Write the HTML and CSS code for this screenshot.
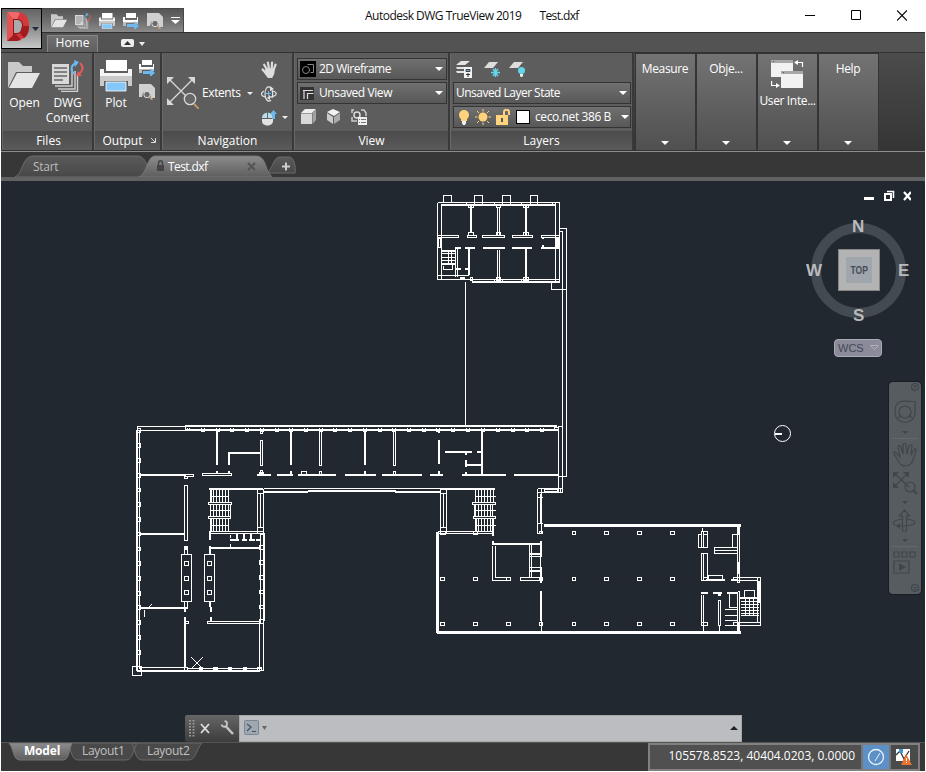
FILE: index.html
```html
<!DOCTYPE html>
<html lang="en">
<head>
<meta charset="utf-8">
<title>Autodesk DWG TrueView 2019</title>
<link rel="stylesheet" href="styles.css">
</head>
<body>
<svg class="defs" width="0" height="0">
  <symbol id="folder" viewBox="0 0 32 27"><path fill="#c9c9c9" d="M0 0h11l4 4h9v6H8L0 26z"/><path fill="#e4e4e4" d="M9 11h23l-8 15H1z"/></symbol>
  <symbol id="convert" viewBox="0 0 32 32"><path fill="#d8d8d8" d="M0 4h17v20H0z"/><path stroke="#666" stroke-width="1.3" d="M2 8h13M2 12h13M2 16h13M2 20h9"/><path fill="none" stroke="#d0d0d0" stroke-width="1.4" d="M3 26h17V9M6 29h17V11M9 31.500h16.500V15"/><path fill="none" stroke="#6cb8ef" stroke-width="2" d="M22 14c-4-4-3-9 2-11"/><path fill="#6cb8ef" d="M22 0l5 2-4 5z"/><path fill="none" stroke="#e65a5a" stroke-width="2" d="M28 3c4 4 3 8-1 11"/><path fill="#e65a5a" d="M30 16h-6l2-5z"/></symbol>
  <symbol id="printer" viewBox="0 0 32 32"><path fill="#fff" d="M6 0h21v11H6z"/><path fill="#f4f4f4" d="M0 9h4v4h24V9h4v7H0z"/><path fill="#c9c9c9" d="M0 16h32v10h-4v-5H4v5H0z"/><path fill="#85c7f7" stroke="#fff" stroke-width=".8" d="M6 22h20v9H6z"/></symbol>
  <symbol id="batch" viewBox="0 0 16 16"><path fill="#fff" d="M3 0h10v5H3zM0 4h2v3h12V4h1v5H0z"/><path fill="#bdbdbd" d="M0 9h15v2h-4v-1H3v3H0z"/><path fill="#6cb8ef" d="M4 11h7V8l5 5-5 4v-3H4z"/></symbol>
  <symbol id="preview" viewBox="0 0 16 16"><path fill="#d0d0d0" d="M0 0h12l4 4v10h-4l-1-4-3-3-4 2-1 4H0z"/><circle cx="8" cy="10.500" r="3.200" fill="#6b6b6b" stroke="#ddd"/><path stroke="#c7a981" stroke-width="1.500" d="M10.500 13l3 3"/></symbol>
  <symbol id="extents" viewBox="0 0 32 32"><path stroke="#d8d8d8" stroke-width="1.300" d="M2 2l18 18M26 2L2 26"/><path fill="#d8d8d8" d="M0 0h7L0 7zM28 0v7l-7-7zM0 28v-7l7 7z"/><circle cx="23" cy="22" r="5.700" fill="#666" stroke="#d8d8d8" stroke-width="1.300"/><path stroke="#c69a66" stroke-width="1.800" d="M27 27l5 5"/></symbol>
  <symbol id="hand" viewBox="0 0 16 16"><path fill="none" stroke="currentColor" stroke-linecap="round" stroke-width="2.100" d="M5.500 8L3 3.500M7.500 7.500L6.500 1.500M10 7.500l.4-6M11.500 9l2.200-5.500M5 12L1.500 8"/><path fill="currentColor" d="M4 7l9 0-.5 5-2 4H6.500l-3-4z"/></symbol>
</svg>

<div class="window">
  <header class="titlebar">
    <div class="quickbar">
      <svg width="16" height="14"><use href="#folder"/></svg>
      <svg width="16" height="16"><use href="#convert"/></svg>
      <svg width="16" height="16"><use href="#printer"/></svg>
      <svg width="16" height="16"><use href="#batch"/></svg>
      <svg width="16" height="16"><use href="#preview"/></svg>
      <svg width="9" height="9"><path fill="#fff" d="M0 1h9v1H0zM0 4h9L4.500 8z"/></svg>
    </div>
    <div class="title"><span class="t-app">Autodesk DWG TrueView 2019</span><span class="t-file">Test.dxf</span></div>
    <div class="controls">
      <svg width="10" height="11"><path stroke="#000" d="M0 5.500h10"/></svg>
      <svg width="10" height="11"><path fill="none" stroke="#000" d="M.5.5h9v9h-9z"/></svg>
      <svg width="10" height="11"><path stroke="#000" stroke-width="1.100" d="M0 .5l10 10M10 .5l-10 10"/></svg>
    </div>
    <button class="appbutton" aria-label="Application menu">
      <svg width="40" height="38"><path fill="#d5383b" d="M5 2h10c8 0 12 5 12 14s-4 14-13 14l-9 1z"/><path fill="#8d1519" d="M11 9h4c4 0 6 3 6 7s-2 8-6 8l-4 1z"/><path fill="#a9abac" d="M12 10h3c3 0 5 2 5 6s-2 7-5 7h-3z"/><path fill="#ed6a68" d="M5 2l6 7h4l3-6-3-1z"/><path fill="#a01c20" d="M5 31l6-6h4l4 5-4 1zM20 16h7c0 6-2 10-5 12l-4-5z"/><path fill="#e55251" d="M5 2l6 7v16l-6 6z"/><path fill="#222b39" d="M30 17h7l-3.500 4z"/></svg>
    </button>
  </header>

  <nav class="tabrow"><span class="home">Home</span><svg width="26" height="9"><rect width="13" height="8" rx="2" fill="#eee"/><path fill="#333" d="M3 6h7L6.500 2z"/><path fill="#eee" d="M18 3h6l-3 4z"/></svg></nav>

  <section class="ribbon">
    <div class="panel files">
      <div class="body">
        <div class="big open"><svg width="32" height="27"><use href="#folder"/></svg><span>Open</span></div>
        <div class="big dwg"><svg width="32" height="32"><use href="#convert"/></svg><span>DWG</span><span>Convert</span></div>
      </div>
      <h2>Files</h2>
    </div>
    <div class="panel output">
      <div class="body">
        <div class="big"><svg width="32" height="32"><use href="#printer"/></svg><span>Plot</span></div>
        <div class="stack"><svg width="16" height="16"><use href="#batch"/></svg><svg width="16" height="16"><use href="#preview"/></svg></div>
      </div>
      <h2><span>Output</span><svg width="5" height="5"><path stroke="#ddd" fill="none" d="M0 0l4 4M4.500 0v4.500H0"/></svg></h2>
    </div>
    <div class="panel navigation">
      <div class="body">
        <svg width="32" height="32"><use href="#extents"/></svg><span class="ext">Extents</span><i class="tri"></i>
        <div class="stack">
          <svg class="pan" width="17" height="17"><use href="#hand"/></svg>
          <svg width="16" height="16"><path fill="none" stroke="#e2e2e2" stroke-width="1.200" d="M10 2c-4-3-6 1-6 6s3 9 6 6M3 5c-4 2-3 5 1 6M11 4c1 3 1 5 0 8M8 11c5 0 8-2 7-4-1-2-3-2-4-2"/><path fill="#e2e2e2" d="M9 0l4 3-4 2zM9 9v5l-3-2z"/><path stroke="#6cb8ef" d="M7.500 5v5M5 7.500h5"/></svg>
          <span class="mouse"><svg width="16" height="16"><path fill="#e2e2e2" d="M1 9h11v2c0 6-11 6-11 0z"/><path fill="#b9dcea" d="M1 8c0-7 11-7 11 0z"/><path fill="#666" d="M6 2h1v6H6z"/><path fill="#6cb8ef" d="M11 9V4H9l3.500-4L16 4h-2v5z"/></svg><i class="tri"></i></span>
        </div>
      </div>
      <h2>Navigation</h2>
    </div>
    <div class="panel view">
      <div class="body col">
        <div class="combo"><svg width="16" height="16"><path d="M0 0h16v16H0z"/><circle cx="6" cy="9" r="3.500" fill="none" stroke="#888"/><path fill="none" stroke="#888" d="M7.500 3.500h6v8h-3"/></svg><span class="wf">2D Wireframe</span><i class="tri wide"></i></div>
        <div class="combo"><svg width="14" height="13"><path fill="#333" d="M0 0h14v13H0z"/><path fill="none" stroke="#ddd" stroke-width="1.200" d="M3 3.500h10M4 3v9M7.500 12V6.500h6"/></svg><span class="uv">Unsaved View</span><i class="tri wide"></i></div>
        <div class="icons">
          <svg width="15" height="15"><path fill="#eee" d="M0 4l4-4h11l-4 4z"/><path fill="#d8d8d8" d="M0 4.500h11V15H0z"/><path fill="#a2a2a2" d="M11.500 4L15 0v11l-3.500 4z"/></svg>
          <svg width="15" height="15"><path fill="#f2f2f2" d="M1 3l6-3 7 3-6 4z"/><path fill="#ccc" d="M1 4l6 4v7l-6-4z"/><path fill="#aaa" d="M8 8l6-4v7l-6 4z"/></svg>
          <svg width="17" height="16"><path fill="none" stroke="#ccc" stroke-width="1.500" d="M1 4V1h2M10 1h3l2 3v3M1 8v4h5"/><circle cx="6" cy="6" r="3" fill="#555" stroke="#ddd" stroke-width="1.500"/><path fill="#f0f0f0" d="M7 8h9v8H7z"/><path stroke="#777" d="M8 10.500h1M10 10.500h5M8 13.500h1M10 13.500h5"/></svg>
        </div>
      </div>
      <h2>View</h2>
    </div>
    <div class="panel layers">
      <div class="body col">
        <div class="icons top">
          <svg width="17" height="17"><path fill="#e4e4e4" d="M5 0h9L9 4H0zM0 6h9v2H1zM0 10h8v2H1z"/><path fill="#f4f4f4" d="M8 6h8v11H8z"/><path fill="#5aaced" stroke="#444" d="M10 8.500h4v2h-4z"/><path stroke="#333" d="M10 13.500h4M12 12v4"/></svg>
          <svg width="17" height="17"><path fill="#ddd" d="M5 1h9L9 7H0z"/><path stroke="#62d5e6" stroke-width="1.400" d="M7 11.500h9M9 8l5 7M14 8l-5 7M11.500 7v9"/></svg>
          <svg width="17" height="17"><path fill="#ddd" d="M5 1h9L9 7H0z"/><circle cx="12.500" cy="9.500" r="3.500" fill="#62d5e6"/><path fill="#eee" d="M11 13h3v2l-1 1h-1l-1-1z"/></svg>
        </div>
        <div class="combo"><span class="ls">Unsaved Layer State</span><i class="tri wide"></i></div>
        <div class="combo">
          <svg width="12" height="16"><circle cx="6" cy="6" r="5" fill="#ffd27c"/><path fill="#ffd27c" d="M3 9h6v3H3z"/><path fill="#f4f4f4" d="M4 12h4v2l-1 2H5l-1-2z"/></svg>
          <svg width="16" height="16"><circle cx="8" cy="8" r="4.500" fill="#ffd27c"/><path stroke="#ffd27c" d="M8 0v2.500M8 13.500V16M0 8h2.500M13.500 8H16M2 2l2 2M12 12l2 2M14 2l-2 2M4 12l-2 2"/></svg>
          <svg width="15" height="16"><path fill="#ffd27c" d="M0 6h12v10H0z"/><path fill="none" stroke="#ffd27c" stroke-width="2" d="M8 7V3c0-3 5-3 5 0v3"/><path fill="#555" d="M5 9h2v4H5z"/></svg>
          <b class="swatch"></b><span class="ce">ceco.net 386 B</span><i class="tri wide"></i>
        </div>
      </div>
      <h2>Layers</h2>
    </div>
    <div class="folded"><span>Measure</span><i class="tri wide"></i></div>
    <div class="folded"><span>Obje...</span><i class="tri wide"></i></div>
    <div class="folded ui"><svg width="33" height="29"><path fill="#f2f2f2" d="M0 3h22v8H10v6H0zM10 14h22v14H10z"/><path fill="#a8a8a8" d="M0 0h22v3H0zM10 11h22v3H10z"/><path fill="#555" d="M2 1h1v1H2zM12 12h1v1h-1z"/><path fill="none" stroke="#fff" stroke-width="1.200" d="M31.500 7V2.500H26M.6 21v4.500H6"/><path fill="#fff" d="M23 2.500L27 0v5zM9 25.500L5 23v5z"/></svg><span>User Inte...</span><i class="tri wide"></i></div>
    <div class="folded"><span>Help</span><i class="tri wide"></i></div>
  </section>

  <nav class="filetabs">
    <svg class="tabshape" width="310" height="25">
      <defs><linearGradient id="ga" x2="0" y2="1"><stop stop-color="#8c8c8c"/><stop offset="1" stop-color="#5e5e5e"/></linearGradient><linearGradient id="gi" x2="0" y2="1"><stop stop-color="#5a5a5a"/><stop offset="1" stop-color="#484848"/></linearGradient></defs>
      <path fill="url(#gi)" stroke="#6b6b6b" d="M14 25c8-3 7-21 18-21h104c8 0 9 8 12 14l4 7z"/>
      <path fill="url(#gi)" stroke="#6b6b6b" d="M266 21c6-4 6-16 13-16h9c5 0 7 9 6 16z"/>
      <path fill="url(#ga)" stroke="#777" d="M138 25c8-3 8-21 16-21h101c8 0 9 8 12 16l4 5z"/>
      <path stroke="#ccc" stroke-width="2" d="M281 14.500h8M285 10.500v8"/>
      <path fill="#444" d="M156 13h7v6h-7z"/><path fill="none" stroke="#444" stroke-width="1.500" d="M157.500 13v-2c0-3 4-3 4 0v2"/>
      <path stroke="#555" stroke-width="2" d="M247 11l7 7M254 11l-7 7"/>
    </svg>
    <span class="start">Start</span><span class="test">Test.dxf</span>
  </nav>

  <main class="canvas">
    <svg class="drawing" width="924" height="561" viewBox="1 181 924 561">
      <!-- single-width lines -->
      <g class="l" transform="translate(.5 .5)">
        <path d="M437 202H559V282M437 202V279M441 204V279M555 202V282M437 275H468M437 279H559M443 202V195H451V202M474 204V195H482V204M502 204V195H510V204M530 204V195H537V204M466 202V205M494 202V205M521 202V205M552 202V205"/>
        <path d="M468 205h5v2h-5zM496 205h4v2h-4zM523 205h5v2h-5zM468 232h5v3h-5zM496 232h4v3h-4zM523 232h5v3h-5zM497 206V235M499 206V235M497 249V280M499 249V280M496 277h4v3h-4zM523 277h5v3h-5zM470 277h2v3h-2zM494 279v3M521 279v3M502 279v3"/>
        <path d="M437 235h21v2h-21zM467 235h9v2h-9zM482 235h22v2h-22zM512 235h20v2h-20zM541 235h18v2h-18zM438 238h2v9h-2z"/>
        <path d="M455 247V276M457 247V276M441 250H455M441 251H455M441 253H455M441 257H455M441 260H455M441 263H455M441 264H455M448 250V263M451 250V263M443 265V269H452V263"/>
        <path d="M559 228H566V476H558M559 231H562V492M551 282V289H566M465 281V426"/>
        <path d="M137 430V426H185M137 430H558M185 429H558M557 426H562M554 427h4v3h-4zM185 426v4M187 427v3M189 427v3M558 429V488"/>
        <path d="M201 427v4h3v-4M216 427v4h3v-4M230 427v4h3v-4M245 427v4h3v-4M260 427v4h3v-4M275 427v4h3v-4M289 427v4h3v-4M304 427v4h3v-4M319 427v4h3v-4M333 427v4h3v-4M348 427v4h3v-4M363 427v4h3v-4M378 427v4h3v-4M392 427v4h3v-4M407 427v4h3v-4M422 427v4h3v-4M436 427v4h3v-4M451 427v4h3v-4M466 427v4h3v-4M481 427v4h3v-4M496 427v4h3v-4M511 427v4h3v-4M525 427v4h3v-4M540 427v4h3v-4"/>
        <path d="M139 430V668M137 428h3v4h-3zM137 443h3v4h-3zM137 458h3v4h-3zM137 473h3v4h-3zM137 488h3v3h-3zM137 502h3v4h-3zM137 517h3v4h-3zM137 532h3v3h-3zM137 547h3v3h-3zM137 561h3v4h-3zM137 576h3v4h-3zM137 591h3v4h-3zM137 605h3v4h-3zM137 620h3v4h-3zM137 635h3v4h-3zM137 650h3v4h-3zM137 666h3v4h-3z"/>
        <path d="M185 474h8v2h-8zM184 476h3v2h-3zM202 473h29v2h-29zM260 440h2v25h-2zM260 430h2v3h-2zM260 470h2v4h-2zM319 430h2v35h-2zM319 471h2v4h-2zM301 471h5v3h-5zM393 430h2v35h-2zM393 471h2v4h-2zM184 485h3v55h-3z"/>
        <path d="M263 488H440M257 488V533M260 492V527M263 488V533M257 493h6M257 527h6M440 488V533M443 493V527M446 488V533M440 493h6M440 527h6M209 531H263M209 533H263M259 531h4v3h-4M437 531H492M437 533H492M440 531h5v3h-5zM473 531h4v3h-4z"/>
        <path d="M208 502h23v2h-23zM208 516h22v2h-22zM472 502h23v2h-23zM473 516h22v2h-22zM209 496h19M209 510h21M209 525h19M475 496h20M475 510h20M475 525h20"/>
        <path d="M537 488V533H542M541 488V533M537 488H562M537 492H562M544 489h13v2h-13zM558 488v4M560 488v4M537 497h5M537 523h5M539 531h3v2h-3z"/>
        <path d="M230 534v3M230 543v4M184 546h3v8h-3zM181 554h10v47h-10zM204 554h10v47h-10zM184 561h4v4h-4zM184 576h4v4h-4zM184 590h4v4h-4zM207 561h4v4h-4zM207 576h4v4h-4zM207 590h4v4h-4zM184 601h3v7h-3zM185 621h3v2h-3zM207 621h53v2h-53z"/>
        <path d="M260 533V621M259 621V670M263 621V670H259M259 545h4v4h-4zM259 560h4v4h-4zM259 575h4v4h-4zM259 590h4v3h-4zM259 605h4v3h-4zM259 619h4v4h-4zM139 667H185M187 668H260M184 667h3v3h-3zM199 667h3v2h-3zM213 667h4v2h-4zM228 667h3v2h-3zM243 667h3v2h-3zM257 667h4v3h-4zM132 666h9v9h-9z"/>
        <path d="M144 609V616M492 545V580H510V577H495V545M506 577v3M520 577h21v3h-21zM529 544V577M531 544V577M540 544V577M529 556H541M529 567H541M541 591V631"/>
        <path d="M440 577h4v3h-4zM473 577h4v3h-4zM539 577h3v3h-3zM572 577h3v3h-3zM604 577h4v3h-4zM637 577h4v3h-4zM670 577h4v3h-4zM440 622h4v3h-4zM473 622h4v3h-4zM506 622h4v3h-4zM539 622h3v3h-3zM572 622h3v3h-3zM604 622h4v3h-4zM637 622h4v3h-4zM670 622h4v3h-4zM572 531h3v3h-3zM604 531h4v3h-4zM637 531h4v3h-4zM670 531h4v3h-4z"/>
        <path d="M702 527v4M701 531h6v16h-6zM703 531v16M698 534h3v13h-3zM701 553h6v27h-6zM703 553v27M703 577h4M703 534h4M708 575h14v4h-14zM714 547h23v6h-23zM714 550h23M732 534h5v13h-5zM737 527V582H739V527M737 591V631M737 591H739V631"/>
        <path d="M733 580V577H760V625H733V622H757V577M733 580H757M757 622h3M744 597V590H754V597M740 601H758M740 604H758M740 607H758M740 610H758M740 613H758M740 615H758M745 598V615M749 598V615M753 598V615"/>
        <path d="M718 594h2v1h-2zM718 600h2v25h-2zM719 625v6M701 594V625M703 594V631M701 622h6v3h-6zM729 593h8v14h-8zM724 609h13M724 615h13M724 620h13M724 625h13"/>
      </g>
      <g class="l soft"><path d="M148 608l4-4M191 657l12 12M203 657l-12 12"/><circle cx="782.500" cy="433.500" r="8"/><path stroke-width="2" d="M775 434h7"/></g>
      <!-- stair treads -->
      <g class="l" transform="translate(.5 .5)">
        <path d="M210 489V502M211 489V502M213 489V502M216 489V502M219 489V502M222 489V502M225 489V502M228 489V502M210 504V516M213 504V516M216 504V516M219 504V516M222 504V516M225 504V516M228 504V516M230 504V516M210 518V531M211 518V531M213 518V531M216 518V531M219 518V531M222 518V531M225 518V531M228 518V531"/>
        <path d="M475 489V502M478 489V502M481 489V502M484 489V502M487 489V502M490 489V502M493 489V502M474 504V516M475 504V516M478 504V516M481 504V516M484 504V516M487 504V516M490 504V516M492 504V516M478 518V531M481 518V531M484 518V531M487 518V531M490 518V531M493 518V531"/>
      </g>
      <!-- double-width walls -->
      <g class="w2">
        <path d="M441 205H555M471 206V232M526 206V235M472 282H559M455 248H461M465 248H475M483 248H505M512 248H532M541 248H559M469 248V275M526 249V280M455 269H461M465 269H469M542 238h2M542 246h2"/>
        <path d="M185 426H557M217 430V465M228 453H261M229 452V465M291 430V465M365 430V465M291 471V475M365 471V475M217 471V474M229 471V474M140 475H185M257 475H271M277 475H293M298 475H336M345 475H376M382 475H422M430 475H443M462 475H506M514 475H558M259 473h5M438 430h4M439 430V433M439 440V464M439 471V475M445 452H472M477 452H482M482 430V475M466 452V455M466 460V467M466 472V475M466 465H482"/>
        <path d="M209 489H263M264 492H308M308 491H396M395 492H440M440 489H495M210 531V540M493 518V531M476 518V531M140 534H185M209 548H260M210 546V554M264 533V621M210 601V607M211 607V612M211 617V621M140 608H187M185 608V612M185 617V667M230 540H239M242 540H247M249 540H255M256 540H261M237 534V540M244 534V540M251 534V540M137 430V671M137 671H260M186 546V550"/>
        <path d="M492 544H541M493 531V536M493 541V544M541 541V556M541 567V583M529 554H541M529 571H541M541 591V621M706 580H725M731 580H737M701 593H708M713 593H722M727 593H737M740 598H759M541 494V523"/>
      </g>
      <g class="w3" transform="translate(.5 .5)"><path d="M557 237V248M459 277.500H464M437 531V632M436 632H740M543 525H740M738 524V534M738 561V573M738 621V633M759 580V602"/></g>
    </svg>

    <div class="docbuttons"><svg width="48" height="12"><path fill="#fff" d="M1 7h10v3H1z"/><path fill="none" stroke="#fff" stroke-width="1.500" d="M24 1.500h6.500V8"/><path fill="none" stroke="#fff" stroke-width="2" d="M22 4h6v6h-6z"/><path stroke="#fff" stroke-width="2.200" d="M41 2l7 8M48 2l-7 8"/></svg></div>

    <div class="cube">
      <span class="n">N</span><span class="w">W</span><span class="e">E</span><span class="s">S</span>
      <div class="face"><span>TOP</span></div>
    </div>
    <div class="wcs"><span>WCS</span><svg width="9" height="6"><path fill="#8b8b9a" stroke="#afafba" d="M.5.5h8l-4 4z"/></svg></div>

    <svg class="navbar" width="32" height="212">
      <rect width="32" height="212" rx="3" fill="#575c60"/>
      <g fill="none" stroke="#3f464e" stroke-width="1.200">
        <circle cx="26" cy="5" r="3.500"/><path d="M24.500 3.500l3 3M27.500 3.500l-3 3"/>
        <path d="M26 19.500V30c0 14-20 14-20 0s8-10.500 20-10.500z"/><circle cx="16" cy="30" r="6"/><path d="M9 36l3-3M20 33l3 3"/>
        <path d="M10 80l-5-8c-1-2 1-3 2-1l4 4-2-10c0-2 2-2 3 0l2 7V63c0-2 3-2 3 0l1 9 2-8c1-2 3-1 3 0l-1 9 3-5c1-2 3-1 2 1l-3 9c-1 3-4 6-7 6-4 0-5-1-7-4z"/>
        <path d="M5 91l15 14M19 91L5 105"/><circle cx="21" cy="105" r="5"/><path stroke-width="2.200" d="M24 108l4 4"/>
        <path d="M13.500 149v-15h-3l5-6 5 6h-3v15zM13 137c-12 2-11 7 0 7M18 137c12 2 11 7-6 7"/>
        <path d="M5 170h5v5H5zM13 170h5v5h-5zM21 170h5v5h-5zM5 179h15v12H5z"/><circle cx="26" cy="206" r="3.500"/>
        <path stroke="#63686c" d="M3 56.500h26M3 164.500h26"/>
      </g>
      <path fill="#3f464e" d="M13 49h6l-3 3zM13 119h6l-3 3zM13 157h6l-3 3zM4 90h6l-6 6zM20 90v6l-6-6zM4 106v-6l6 6zM7 144l4-3v6zM10 181l7 4-7 4zM24 205h4v1h-4zM24 207h4l-2 2z"/>
    </svg>

    <div class="command">
      <div class="grip"><svg width="54" height="26"><path stroke="#999" stroke-width="2" stroke-dasharray="1.500 1.500" d="M5 5v17M8.500 5v17"/><path stroke="#ddd" stroke-width="1.800" d="M16 9l8 9M24 9l-8 9"/><path stroke="#c4c4c4" stroke-width="2.500" d="M41 11.500l7 7.500"/><path fill="none" stroke="#c4c4c4" stroke-width="1.800" d="M36.500 9.500c1 3 5 3 5.500 0s-1-3-2.500-3.500"/></svg></div>
      <div class="prompt"><svg width="31" height="16"><rect x=".5" y=".5" width="14" height="14" rx="1" fill="#9ea8b2" stroke="#7c858e"/><path fill="none" stroke="#44505c" stroke-width="1.200" d="M3 4l4 3-4 4M8 11.500h4"/><path fill="#666" d="M18 6h5l-2.500 4z"/></svg><i class="up"></i></div>
    </div>
  </main>

  <footer class="bottom">
    <svg class="layoutshape" width="205" height="18"><path fill="#494949" stroke="#686868" d="M131 0c3 6 3 17 10 17h47c7 0 7-10 13-17zM67 0c3 6 3 17 10 17h48c7 0 7-10 11-17z"/><path fill="url(#ga)" stroke="#777" d="M8 0c5 6 4 17 11 17h43c6 0 6-10 9-17z"/></svg>
    <b class="model">Model</b><span class="l1">Layout1</span><span class="l2">Layout2</span>
    <div class="status">
      <span class="coords"><span>105578.8523, 40404.0203, 0.0000</span></span>
      <span class="cell blue"><svg width="18" height="18"><circle cx="9" cy="9" r="7.500" fill="none" stroke="#e8f2fb" stroke-width="1.300"/><path stroke="#e8f2fb" d="M8 13l5-8"/></svg></span>
      <span class="cell"><svg width="18" height="18"><path fill="#fff" d="M1 1h14v12H1z"/><path fill="none" stroke="#333" stroke-width="1.300" d="M1 7l4-4 4 8 5-8"/><path fill="#3f97db" d="M4 1h4v4H4z"/><path fill="#e9722f" d="M11 6l6 11H6z"/><path stroke="#fff" d="M11.500 10v3M11.500 14v1"/></svg></span>
    </div>
  </footer>
</div>
</body>
</html>
```
FILE: styles.css
```css
* { box-sizing: border-box; }
body { margin: 0; background: #fff; font: 12px/16px "Open Sans", "Noto Sans", sans-serif; color: #fff; overflow: hidden; }
svg { display: block; flex: none; }
.defs { position: absolute; }
.window { width: 924px; height: 771px; margin-left: 1px; display: flex; flex-direction: column; }
span { white-space: nowrap; }

.titlebar { height: 32px; position: relative; display: flex; background: #fff; color: #111; }
.quickbar { width: 183px; height: 24px; margin-top: 8px; padding-left: 49px; display: flex; align-items: center; gap: 8px; background: linear-gradient(#555, #6c6c6c 50%, #8a8a8a); border: 1px solid #484848; border-bottom: 0; }
.title { flex: 1; padding: 8px 0 0 181px; display: flex; gap: 18px; }
.t-app { letter-spacing: -.51px; }
.t-file { letter-spacing: -.6px; }
.controls { display: flex; gap: 36px; margin: 10px 18px 0 0; }
.appbutton { position: absolute; left: 0; top: 8px; width: 41px; height: 41px; padding: 0; border: 1px solid #000; background: linear-gradient(#656565, #888 45%, #c6c8ca); z-index: 2; }

.tabrow { height: 20px; border-top: 1px solid #303030; background: #535353; display: flex; padding: 2px 0 0 46px; gap: 23px; }
.tabrow svg { margin-top: 4px; }
.home { width: 51px; height: 18px; text-align: center; border: 1px solid #858585; border-bottom: 0; background: linear-gradient(#707070, #5e5e5e); line-height: 14px; }

.ribbon { height: 100px; display: flex; align-items: flex-start; background: linear-gradient(#4c4c4c, #343434); border-top: 1px solid #303030; border-bottom: 1px solid #8d8d8d; padding-left: 1px; }
.panel { height: 97px; border-right: 2px solid #393939; display: flex; flex-direction: column; background: #5d5d5d; border-left: 1px solid #686868; }
.panel h2 { margin: 0; height: 19px; font-size: 12px; font-weight: 400; line-height: 19px; background: linear-gradient(#4b4b4b, #5a5a5a); display: flex; align-items: center; justify-content: center; }
.body { height: 78px; display: flex; }
.body.col { flex-direction: column; }
.big { display: flex; flex-direction: column; align-items: center; text-align: center; }
.big span { line-height: 15px; letter-spacing: -.1px; }
.files { width: 92px; }
.files h2 { padding-left: 2px; }
.open { width: 38px; padding: 9px 0 0 4px; }
.open span { margin: 6px 0 0 1px; }
.dwg { width: 49px; padding: 7px 0 0 4px; }
.dwg span { margin-top: 3px; }
.dwg span + span { margin-top: 0; }
.output { width: 68px; }
.output .big { width: 41px; padding: 7px 0 0 1px; }
.output .big span { margin-top: 3px; }
.output .stack { padding: 7px 0 0 3px; display: flex; flex-direction: column; gap: 8px; }
.output h2 { gap: 9px; padding-left: 4px; }
.navigation { width: 132px; }
.navigation .body { align-items: center; padding: 2px 0 0 4px; }
.navigation .stack { display: flex; flex-direction: column; gap: 8px; margin-left: 8px; }
.pan { color: #ddd; }
.ext { margin-left: 3px; letter-spacing: -.4px; }
.tri { width: 0; height: 0; border: 3px solid transparent; border-top: 3px solid #eee; border-bottom: 0; margin-left: 6px; flex: none; }
.tri.wide { border-width: 4px 4px 0; margin-left: auto; border-top-color: #fff; }
.mouse { display: flex; align-items: center; }
.mouse .tri { margin-left: 5px; }
.view { width: 156px; }
.combo { display: flex; align-items: center; border: 1px solid #343434; background: linear-gradient(#707070, #585858); height: 22px; padding: 0 3px; flex: none; }
.view .body { padding: 5px 1px 0 2px; gap: 2px; }
.view .combo { padding-left: 2px; }
.view .combo span { margin-left: 3px; }
.wf { letter-spacing: -.5px; }
.uv { letter-spacing: -.4px; padding-left: 2px; }
.icons { display: flex; gap: 10px; padding: 3px 0 0 4px; }
.layers { width: 184px; }
.layers .body { padding: 4px 1px 0 2px; gap: 2px; }
.icons.top { height: 23px; padding: 4px 0 0 3px; gap: 11px; }
.layers .icons.top svg:nth-child(3) { margin-left: -3px; }
.layers .combo { padding: 0 3px 0 2px; gap: 5px; }
.layers .combo svg { margin-left: 2px; }
.layers .combo svg + svg { margin-left: 0; }
.layers .combo .tri { margin-right: 0; }
.ls { letter-spacing: -.52px; }
.ce { letter-spacing: -.4px; }
.layers .combo:last-child .tri { margin-right: -2px; }
.swatch { width: 14px; height: 14px; flex: none; background: #fff; border: 1px solid #000; }
.folded { width: 59px; height: 96px; margin: 1px 0 0 2px; flex: none; display: flex; flex-direction: column; align-items: center; background: linear-gradient(#737373, #505050); padding: 7px 1px 5px 0; outline: 1px solid #343434; }
.folded span { letter-spacing: -.35px; }
.folded .tri { margin: auto auto 0; }
.folded.ui { padding-top: 6px; }
.folded.ui svg { margin-left: 1px; }
.folded.ui span { margin-top: 4px; margin-left: 1px; }

.filetabs { height: 29px; background: #373737; border-bottom: 4px solid #626262; position: relative; }
.tabshape, .start, .test { position: absolute; left: 0; top: 0; }
.start { left: 32px; top: 7px; color: #bbb; letter-spacing: -.3px; }
.test { left: 167px; top: 7px; letter-spacing: -.6px; }

.canvas { height: 561px; background: #212830; position: relative; overflow: hidden; }
.drawing { position: absolute; left: 0; top: 0; }
.l { fill: none; stroke: #fff; stroke-width: 1; shape-rendering: crispEdges; }
.l.soft { shape-rendering: auto; }
.w2 { fill: none; stroke: #fff; stroke-width: 2; shape-rendering: crispEdges; }
.w3 { fill: none; stroke: #fff; stroke-width: 3; shape-rendering: crispEdges; }
.docbuttons { position: absolute; right: 14px; top: 9px; }
.cube { position: absolute; left: 810px; top: 42px; width: 95px; height: 95px; border: 10px solid #434a52; border-radius: 50%; font: bold 17px/18px "Liberation Sans", Arial, sans-serif; color: #b9babc; }
.cube > span { position: absolute; }
.n { left: 31px; top: -15px; }
.s { left: 32px; top: 74px; }
.w { left: -15px; top: 29px; }
.e { left: 77px; top: 29px; }
.face { position: absolute; left: 17px; top: 16px; width: 42px; height: 42px; border: 8px solid #b3b3b3; background: #9fa6ac; outline: 1px solid #858585; outline-offset: -1px; display: flex; align-items: center; justify-content: center; font-size: 11px; color: #454c58; }
.face span { transform: scaleX(.78); }
.wcs { position: absolute; left: 833px; top: 158px; width: 48px; height: 18px; border: 1px solid #aaa9b9; border-radius: 4px; background: #8b8b9a; color: #434756; display: flex; align-items: center; gap: 6px; padding: 0 0 1px 3px; font: 11px/14px "Liberation Sans", Arial, sans-serif; }
.navbar { position: absolute; left: 888px; top: 201px; outline: 1px solid #181d23; border-radius: 3px; }
.command { position: absolute; left: 184px; top: 534px; width: 557px; height: 27px; display: flex; }
.grip { width: 54px; background: linear-gradient(#666, #3c3c3c); border-radius: 2px 0 0 2px; }
.prompt { flex: 1; background: #bbbdc0; display: flex; align-items: center; padding: 0 3px 1px 4px; border: 1px solid #a8a8a8; }
.up { margin-left: auto; border: 4px solid transparent; border-top: 0; border-bottom-color: #222; }

.bottom { height: 29px; background: #373737; border-top: 1px solid #555; position: relative; display: flex; }
.layoutshape { position: absolute; left: 0; top: 0; }
.model, .l1, .l2 { position: absolute; top: 0; }
.model { left: 23px; letter-spacing: -.2px; }
.l1 { left: 81px; color: #c2c2c2; letter-spacing: -.3px; }
.l2 { left: 146px; color: #c2c2c2; letter-spacing: -.3px; }
.status { margin-left: 647px; display: flex; height: 28px; border: 2px solid #808080; width: 272px; background: #4a4a4a; }
.coords { width: 211px; padding-right: 6px; text-align: right; line-height: 22px; background: #505050; }
.cell { width: 28px; border-left: 2px solid #777; display: flex; align-items: center; justify-content: center; }
.blue { background: #5e90c8; }
```
